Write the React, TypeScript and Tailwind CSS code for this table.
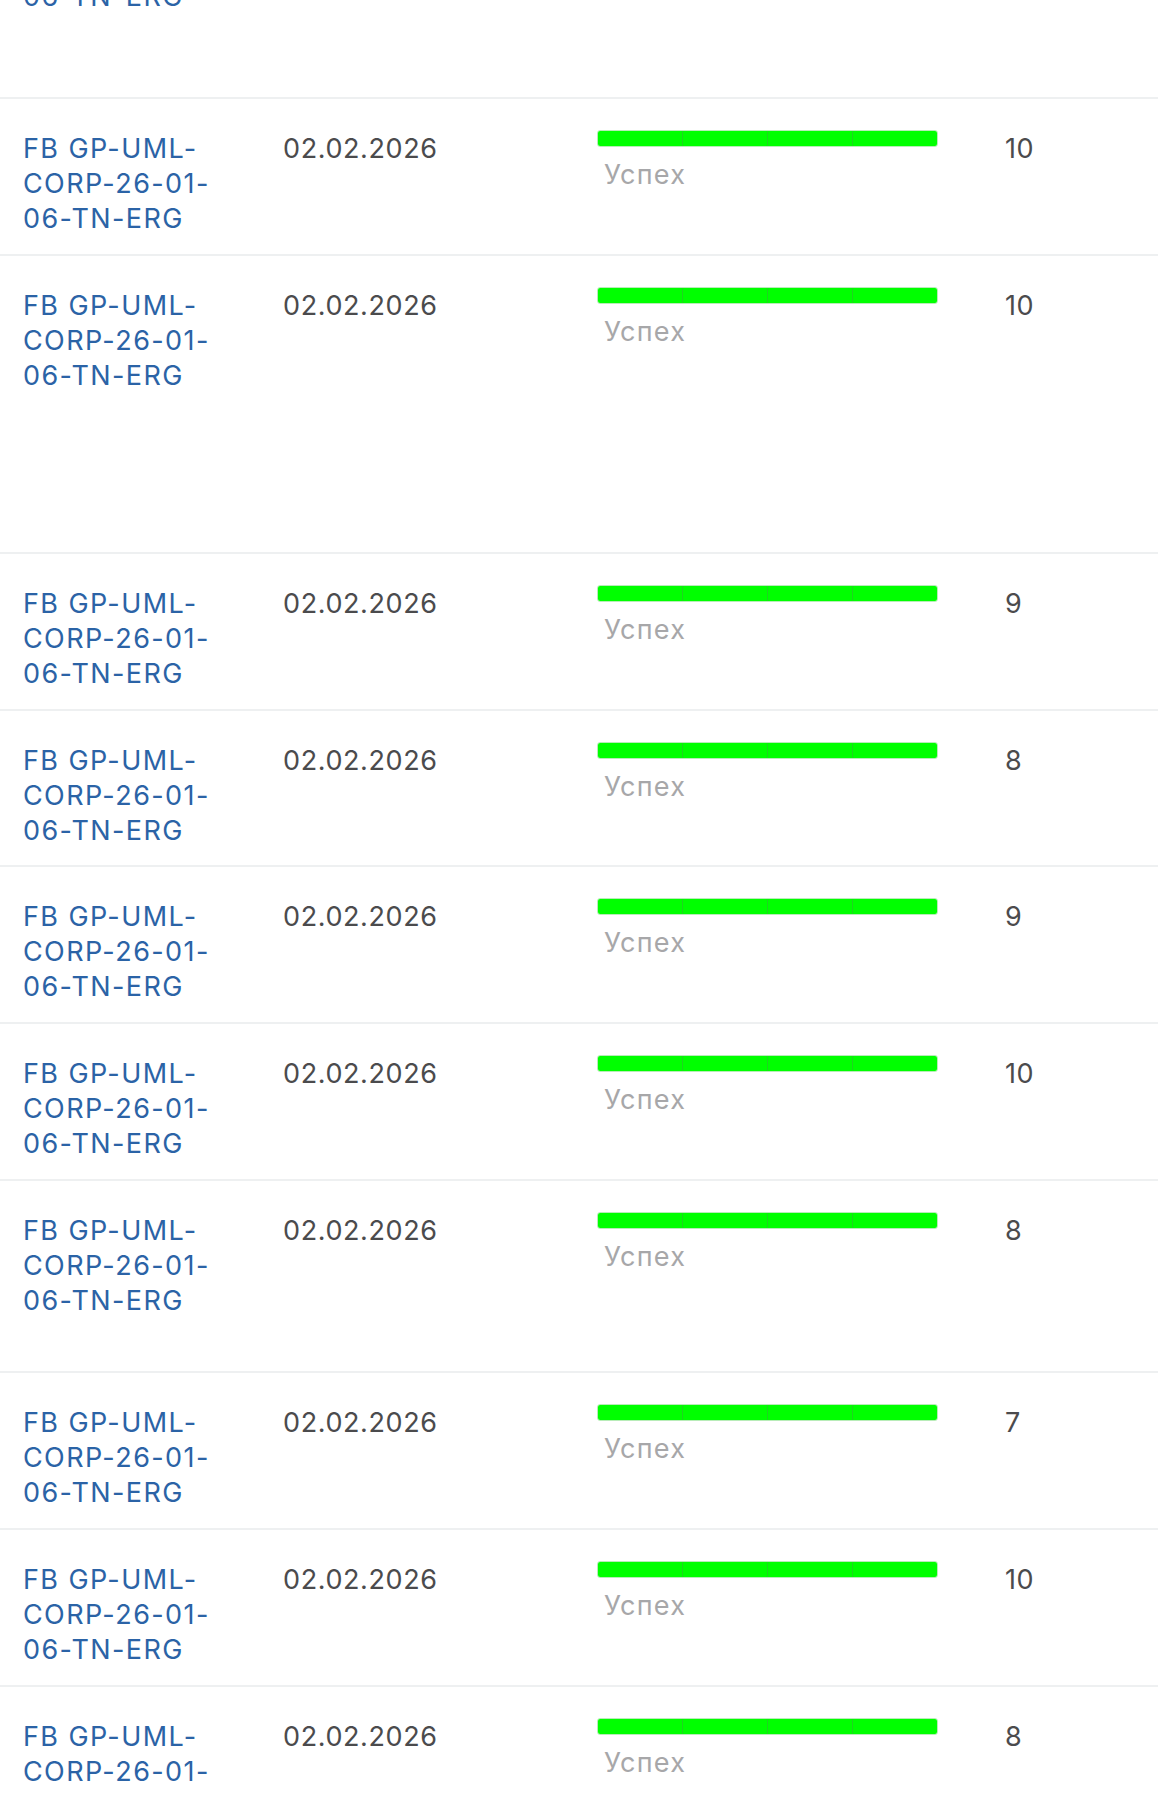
const rows = [
  { score: 8, h: 'h-[222px] -mt-[125px]' },
  { score: 10, h: 'h-[157px]' },
  { score: 10, h: 'h-[298px]' },
  { score: 9, h: 'h-[157px]' },
  { score: 8, h: 'h-[156px]' },
  { score: 9, h: 'h-[157px]' },
  { score: 10, h: 'h-[157px]' },
  { score: 8, h: 'h-[192px]' },
  { score: 7, h: 'h-[157px]' },
  { score: 10, h: 'h-[157px]' },
  { score: 8, h: 'h-[157px]' },
]

function ProgressBar() {
  return (
    <div className="flex h-[17px] w-[341px] overflow-hidden rounded-[3px] border border-[#b8ecb8]">
      <div className="flex-1 bg-[#00ff00]" />
      <div className="flex-1 border-l border-[#1fd41f] bg-[#00ff00]" />
      <div className="flex-1 border-l border-[#1fd41f] bg-[#00ff00]" />
      <div className="flex-1 border-l border-[#1fd41f] bg-[#00ff00]" />
    </div>
  )
}

export default function App() {
  return (
    <div className="min-h-[1794px] overflow-hidden bg-white font-['Inter','Liberation_Sans',sans-serif] text-[27px] leading-[35px]">
      {rows.map((row, i) => (
        <div
          key={i}
          className={`grid grid-cols-[283px_314px_408px_1fr] border-t-2 border-[#eef0f1] pt-[32px] ${row.h}`}
        >
          {/* Название */}
          <div className="pl-[23px] pr-[36px] tracking-[1.4px] text-[#2b63a6]">FB GP-UML-CORP-26-01-06-TN-ERG</div>

          {/* Дата */}
          <div className="tracking-[0.6px] text-[#4b4b4d]">02.02.2026</div>

          {/* Статус */}
          <div className="-mt-[1px] flex flex-col">
            <ProgressBar />
            <span className="mt-[10px] pl-[7px] tracking-[1.2px] text-[#a7a7a9]">Успех</span>
          </div>

          {/* Оценка */}
          <div className="tracking-[0.6px] text-[#4b4b4d]">{row.score}</div>
        </div>
      ))}
    </div>
  )
}
